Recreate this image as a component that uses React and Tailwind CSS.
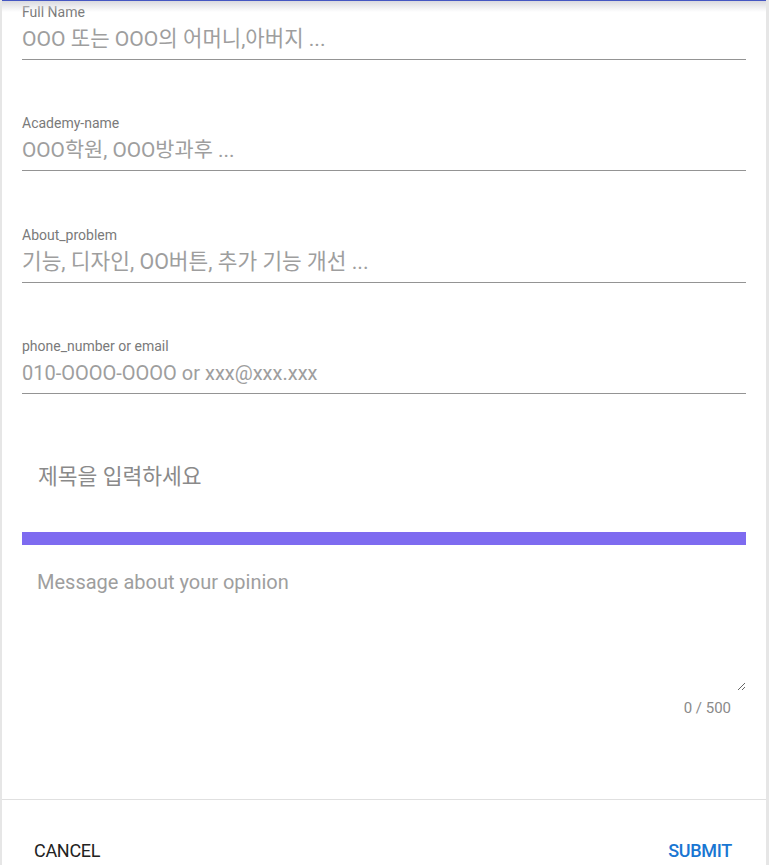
import React from "react";

const fields = [
  { label: "Full Name", placeholder: "OOO 또는 OOO의 어머니,아버지 ...", size: "text-[21.1px]" },
  { label: "Academy-name", placeholder: "OOO학원, OOO방과후 ...", size: "text-[20.8px]" },
  { label: "About_problem", placeholder: "기능, 디자인, OO버튼, 추가 기능 개선 ...", size: "text-[21.4px]" },
  { label: "phone_number or email", placeholder: "010-OOOO-OOOO or xxx@xxx.xxx", size: "text-[20px]" },
];

export default function App() {
  return (
    <div
      className="relative h-[865px] w-full overflow-hidden bg-white border-l-2 border-r-[3px] border-[#e6e6e6]"
      style={{ fontFamily: "Roboto, 'Noto Sans CJK KR', sans-serif" }}
    >
      {/* top scroll shadow */}
      <div className="pointer-events-none absolute inset-x-0 top-0 h-[12px] bg-gradient-to-b from-[#d6d6dc] to-transparent">
        <div className="h-px bg-[#4556c2]" />
      </div>

      <div className="px-[20px]">
        {fields.map((f, i) => (
          <div key={f.label} className={i === 0 ? "pt-[4px]" : "pt-[55.4px]"}>
            <label className="block text-[14px] leading-[16px] text-[#7a7a7a]">
              {f.label}
            </label>
            <input
              placeholder={f.placeholder}
              className={`block h-[40px] w-full border-b border-[#949494] bg-transparent pb-[2px] ${f.size} text-[#333] outline-none placeholder:text-[#9e9e9e]`}
            />
          </div>
        ))}

        {/* title */}
        <div className="h-[138px] pt-[67px]">
          <input
            placeholder="제목을 입력하세요"
            className="block h-[32px] w-full bg-transparent px-[16px] text-[21.5px] text-[#333] outline-none placeholder:text-[#8a8a8a]"
          />
        </div>

        <div className="h-[13px] bg-[#7e6bf0]" />

        {/* message */}
        <textarea
          placeholder="Message about your opinion"
          className="block h-[146px] w-full px-[15px] pt-[23px] text-[20px] leading-[28px] text-[#333] outline-none placeholder:text-[#9e9e9e]"
        />
        <div className="pr-[15px] pt-[6px] text-right text-[15px] text-[#8a8a8a]">0 / 500</div>
      </div>

      {/* footer */}
      <div className="mt-[79px] border-t border-[#e0e0e0] flex items-center justify-between pl-[32px] pr-[34px] pt-[37px]">
        <button className="text-[18px] uppercase tracking-[-0.3px] text-[#222]">Cancel</button>
        <button className="text-[18px] font-medium uppercase tracking-[-0.3px] text-[#1976d2]">Submit</button>
      </div>
    </div>
  );
}
